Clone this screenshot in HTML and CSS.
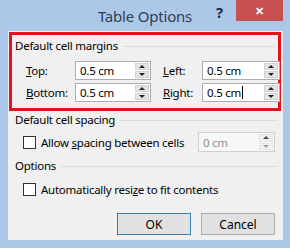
FILE: index.html
```html
<!DOCTYPE html>
<html lang="en">
<head>
    <meta charset="UTF-8">
    <title>Table Options</title>
    <link rel="stylesheet" href="styles.css">
</head>
<body>
<div class="window">
    <div class="titlebar">
        <span></span>
        <span class="title">Table Options</span>
        <div class="controls">
            <span class="help">?</span>
            <span class="close">&#x2715;</span>
        </div>
    </div>

    <div class="panel">
        <!-- margins group (highlighted) -->
        <div class="group highlight">
            <div class="group-head"><span>Default cell margins</span></div>
            <div class="margins">
                <label><u>T</u>op:</label>
                <div class="spin"><span class="value">0.5 cm</span><span class="arrows"><i class="up"></i><i class="down"></i></span></div>
                <label class="right-label"><u>L</u>eft:</label>
                <div class="spin"><span class="value">0.5 cm</span><span class="arrows"><i class="up"></i><i class="down"></i></span></div>
                <label><u>B</u>ottom:</label>
                <div class="spin"><span class="value">0.5 cm</span><span class="arrows"><i class="up"></i><i class="down"></i></span></div>
                <label class="right-label"><u>R</u>ight:</label>
                <div class="spin"><span class="value">0.5 cm<span class="caret"></span></span><span class="arrows"><i class="up"></i><i class="down"></i></span></div>
            </div>
        </div>

        <div class="group-head section"><span>Default cell spacing</span></div>
        <div class="check-row">
            <span class="checkbox"></span>
            <span class="check-text">Allow <u>s</u>pacing between cells</span>
            <div class="spin disabled"><span class="value">0 cm</span><span class="arrows"><i class="up"></i><i class="down"></i></span></div>
        </div>

        <div class="group-head section options"><span>Options</span></div>
        <div class="check-row second">
            <span class="checkbox"></span>
            <span class="check-text">Automatically resi<u>z</u>e to fit contents</span>
        </div>

        <div class="buttons">
            <button class="btn default">OK</button>
            <button class="btn">Cancel</button>
        </div>
    </div>
</div>
</body>
</html>
```

FILE: styles.css
```css
/* Base */
body {
    margin: 0;
    font-family: 'Noto Sans', 'Open Sans', sans-serif;
    font-size: 11.5px;
    letter-spacing: -0.25px;
    color: #000;
}

.window {
    width: 290px;
    height: 248px;
    background-color: #abc8e8;
    display: flex;
    flex-direction: column;
}

/* --- TITLE BAR --- */
.titlebar {
    height: 31px;
    display: grid;
    grid-template-columns: 1fr auto 1fr;
    align-items: start;
}

.title {
    font-size: 15px;
    letter-spacing: -0.2px;
    color: #2f3f55;
    line-height: 20px;
    padding-top: 6px;
}

.controls {
    display: flex;
    justify-content: flex-end;
    margin-right: 7px;
}

.help {
    font-size: 15px;
    font-weight: bold;
    color: #1d2c44;
    line-height: 20px;
    padding-top: 2px;
    margin-right: 13px;
}

.close {
    width: 47px;
    height: 21px;
    background-color: #c75050;
    color: #fff;
    font-size: 11px;
    font-weight: bold;
    display: flex;
    justify-content: center;
    align-items: center;
}

/* --- CONTENT PANEL --- */
.panel {
    flex: 1;
    margin: 0 7px 8px 8px;
    background-color: #f0f0f0;
    padding: 1px 2px 0 1px;
}

.group.highlight {
    border: 3px solid #e3121c;
    height: 70px;
    padding: 3px 0 0 3px;
}

.group-head {
    display: flex;
    align-items: center;
    height: 16px;
    line-height: 16px;
    padding-right: 3px;
    white-space: nowrap;
}

.group-head::after {
    content: '';
    flex: 1;
    height: 1px;
    background-color: #dcdcdc;
    margin-left: 5px;
}

.group-head.section {
    margin: 1px 0 0 6px;
}

.group-head.options {
    margin-top: 6px;
}

.margins {
    display: grid;
    grid-template-columns: 49px 76px 51px 78px;
    grid-auto-rows: 19px;
    row-gap: 3px;
    align-items: center;
    margin: 7px 0 0 11px;
}

.right-label {
    padding-left: 12px;
}

/* --- SPIN BOX --- */
.spin {
    height: 19px;
    box-sizing: border-box;
    border: 1px solid #abadb3;
    background: #fff;
    display: flex;
    align-items: center;
    padding: 1px;
}

.spin .value {
    flex: 1;
    padding-left: 3px;
    display: flex;
    align-items: center;
    white-space: nowrap;
}

.caret {
    width: 1px;
    height: 13px;
    background: #000;
    margin-left: 1px;
}

.arrows {
    width: 14px;
    height: 100%;
    display: flex;
    flex-direction: column;
    gap: 1px;
}

.arrows i {
    flex: 1;
    background: #e5e5e5;
    border: 1px solid #d2d2d2;
    display: flex;
    justify-content: center;
    align-items: center;
}

.arrows i::before {
    content: '';
    border-left: 3px solid transparent;
    border-right: 3px solid transparent;
}

.arrows .up::before {
    border-bottom: 3px solid #222;
}

.arrows .down::before {
    border-top: 3px solid #222;
}

.spin.disabled {
    border-color: #cfcfcf;
    height: 20px;
    color: #8d8d8d;
    background: #f7f7f7;
}

.spin.disabled .arrows i {
    background: #f0f0f0;
    border-color: #e3e3e3;
}

.spin.disabled .up::before {
    border-bottom-color: #444;
}

.spin.disabled .down::before {
    border-top-color: #a0a0a0;
}

/* --- CHECK ROWS --- */
.check-row {
    display: flex;
    align-items: center;
    height: 20px;
    margin: 4px 0 0 14px;
}

.check-row.second {
    margin-top: 5px;
}

.checkbox {
    width: 11px;
    height: 11px;
    border: 1px solid #333;
    background: #fff;
    margin-right: 5px;
}

.check-text {
    flex: 1;
    white-space: nowrap;
}

.check-row .spin {
    width: 77px;
    margin-right: 6px;
}

/* --- BUTTONS --- */
.buttons {
    display: flex;
    justify-content: flex-end;
    gap: 10px;
    margin: 14px 6px 0 0;
}

.btn {
    width: 74px;
    height: 22px;
    font-family: inherit;
    font-size: 12px;
    background: #e1e1e1;
    border: 1px solid #adadad;
    padding: 0;
}

.btn.default {
    border-color: #3c7fb1;
}
```
